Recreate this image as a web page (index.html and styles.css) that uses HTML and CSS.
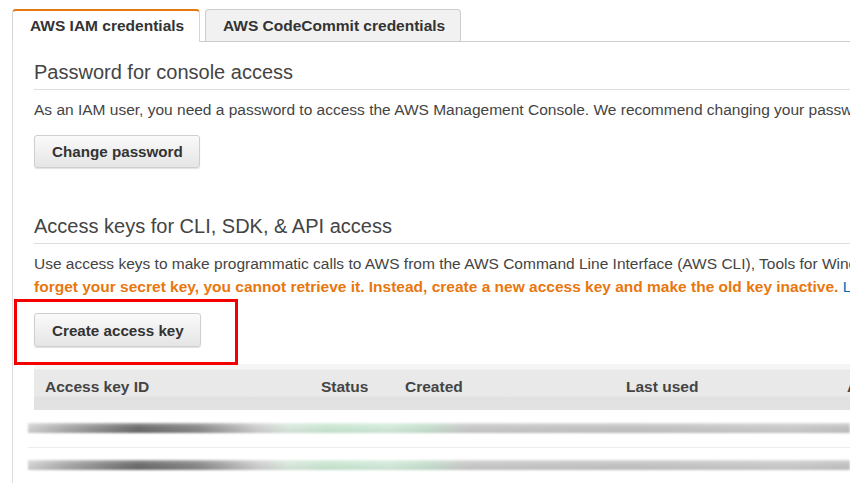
FILE: index.html
```html
<!DOCTYPE html>
<html lang="en">
<head>
<meta charset="utf-8">
<title>Security credentials</title>
<link rel="stylesheet" href="styles.css">
</head>
<body>
<div class="page">
  <div class="tabs">
    <div class="tab tab-active">AWS IAM credentials</div>
    <div class="tab">AWS CodeCommit credentials</div>
  </div>
  <div class="panel">
    <h2 class="section-title first">Password for console access</h2>
    <p class="text">As an IAM user, you need a password to access the AWS Management Console. We recommend changing your password regularly.</p>
    <div class="actions">
      <button class="btn">Change password</button>
    </div>

    <h2 class="section-title second">Access keys for CLI, SDK, &amp; API access</h2>
    <p class="text">Use access keys to make programmatic calls to AWS from the AWS Command Line Interface (AWS CLI), Tools for Windows PowerShell, the AWS SDKs, or direct AWS API calls.</p>
    <p class="text"><span class="warn">forget your secret key, you cannot retrieve it. Instead, create a new access key and make the old key inactive.</span> <a class="link" href="#">Learn more</a></p>
    <div class="actions key-actions">
      <button class="btn">Create access key</button>
      <div class="highlight"></div>
    </div>

    <div class="table-head">
      <div class="th">Access key ID</div>
      <div class="th">Status</div>
      <div class="th">Created</div>
      <div class="th">Last used</div>
      <div class="th">Actions</div>
    </div>
    <div class="rows">
      <div class="row"><div class="blur-bar"></div></div>
      <div class="row"><div class="blur-bar"></div></div>
    </div>
  </div>
</div>
</body>
</html>
```

FILE: styles.css
```css
html, body {
  margin: 0;
  padding: 0;
  background: #ffffff;
}

body {
  width: 856px;
  height: 483px;
  overflow: hidden;
  font-family: "Liberation Sans", Arial, sans-serif;
  color: #444444;
}

.page {
  padding: 9px 0 0 12px;
  width: 838px;
}

.tabs {
  display: flex;
  align-items: flex-end;
  border-bottom: 1px solid #cccccc;
  height: 32px;
}

.tab {
  box-sizing: border-box;
  height: 32px;
  display: flex;
  align-items: center;
  padding: 0 10px 0 17px;
  font-size: 15.5px;
  font-weight: bold;
  color: #333333;
  white-space: nowrap;
  border: 1px solid #cccccc;
  border-bottom: none;
  border-radius: 4px 4px 0 0;
  background: #f1f1f1;
  margin-left: 5px;
  width: 256px;
}

.tab-active {
  margin-left: 0;
  width: 188px;
  height: 33px;
  margin-bottom: -1px;
  background: #ffffff;
  border-top: 2px solid #e47911;
  border-color: #e47911 #d6d6d6 #ffffff #d6d6d6;
  padding-bottom: 1px;
}

.panel {
  border-left: 1px solid #dddddd;
  padding-left: 21px;
  overflow: hidden;
  height: 460px;
}

.section-title {
  margin: 0;
  font-size: 20px;
  font-weight: normal;
  line-height: 24px;
  color: #444444;
  padding-bottom: 5px;
  border-bottom: 1px solid #dddddd;
}

.section-title.first {
  margin-top: 18px;
}

.section-title.second {
  margin-top: 46px;
}

.text {
  margin: 0;
  font-size: 15.5px;
  line-height: 23px;
  white-space: nowrap;
  color: #444444;
}

.section-title + .text {
  margin-top: 8px;
}

.warn {
  color: #e8770f;
  font-weight: bold;
}

.link {
  color: #0073bb;
  text-decoration: none;
}

.actions {
  margin-top: 14px;
  display: flex;
}

.key-actions {
  position: relative;
  margin-top: 15px;
}

.btn {
  box-sizing: border-box;
  height: 33px;
  padding: 0 16px 0 17px;
  font-family: "Liberation Sans", Arial, sans-serif;
  font-size: 15.2px;
  font-weight: bold;
  color: #333333;
  background: linear-gradient(#fafafa, #e5e5e5);
  border: 1px solid #cfcfcf;
  border-radius: 3px;
  box-shadow: 0 1px 1px rgba(0, 0, 0, 0.12);
}

.key-actions .btn {
  height: 34px;
}

.highlight {
  position: absolute;
  left: -20px;
  top: -14px;
  width: 224px;
  height: 66px;
  box-sizing: border-box;
  border: 3px solid #f40000;
}

.table-head {
  margin-top: 17px;
  height: 46px;
  display: grid;
  grid-template-columns: 276px 84px 221px 221px 1fr;
  align-items: center;
  padding-left: 11px;
  background: linear-gradient(#f5f5f5 0, #f5f5f5 5px, #e9e9e9 6px, #e9e9e9 32px, #e1e1e1 33px, #e3e3e3 100%);
  white-space: nowrap;
}

.th {
  font-size: 15.5px;
  font-weight: bold;
  color: #444444;
}

.rows {
  margin-left: -6px;
}

.row {
  padding: 13px 0 14px;
  border-bottom: 1px solid #ececec;
}

.row + .row {
  border-bottom: none;
  padding-top: 12px;
}

.blur-bar {
  height: 10px;
  background:
    linear-gradient(rgba(255,255,255,0.35), rgba(255,255,255,0) 40%, rgba(0,0,0,0.05) 100%),
    linear-gradient(90deg,
      #d2d2d2 0,
      #a9a9a9 40px,
      #6c6c6c 110px,
      #8a8a8a 170px,
      #cfcfcf 230px,
      #d9e8dc 260px,
      #c9e6d1 300px,
      #d3eadb 360px,
      #c6dfcd 400px,
      #c9c9c9 440px,
      #c3c3c3 600px,
      #cbcbcb 760px,
      #c2c2c2 821px);
  filter: blur(1.2px);
}
```
